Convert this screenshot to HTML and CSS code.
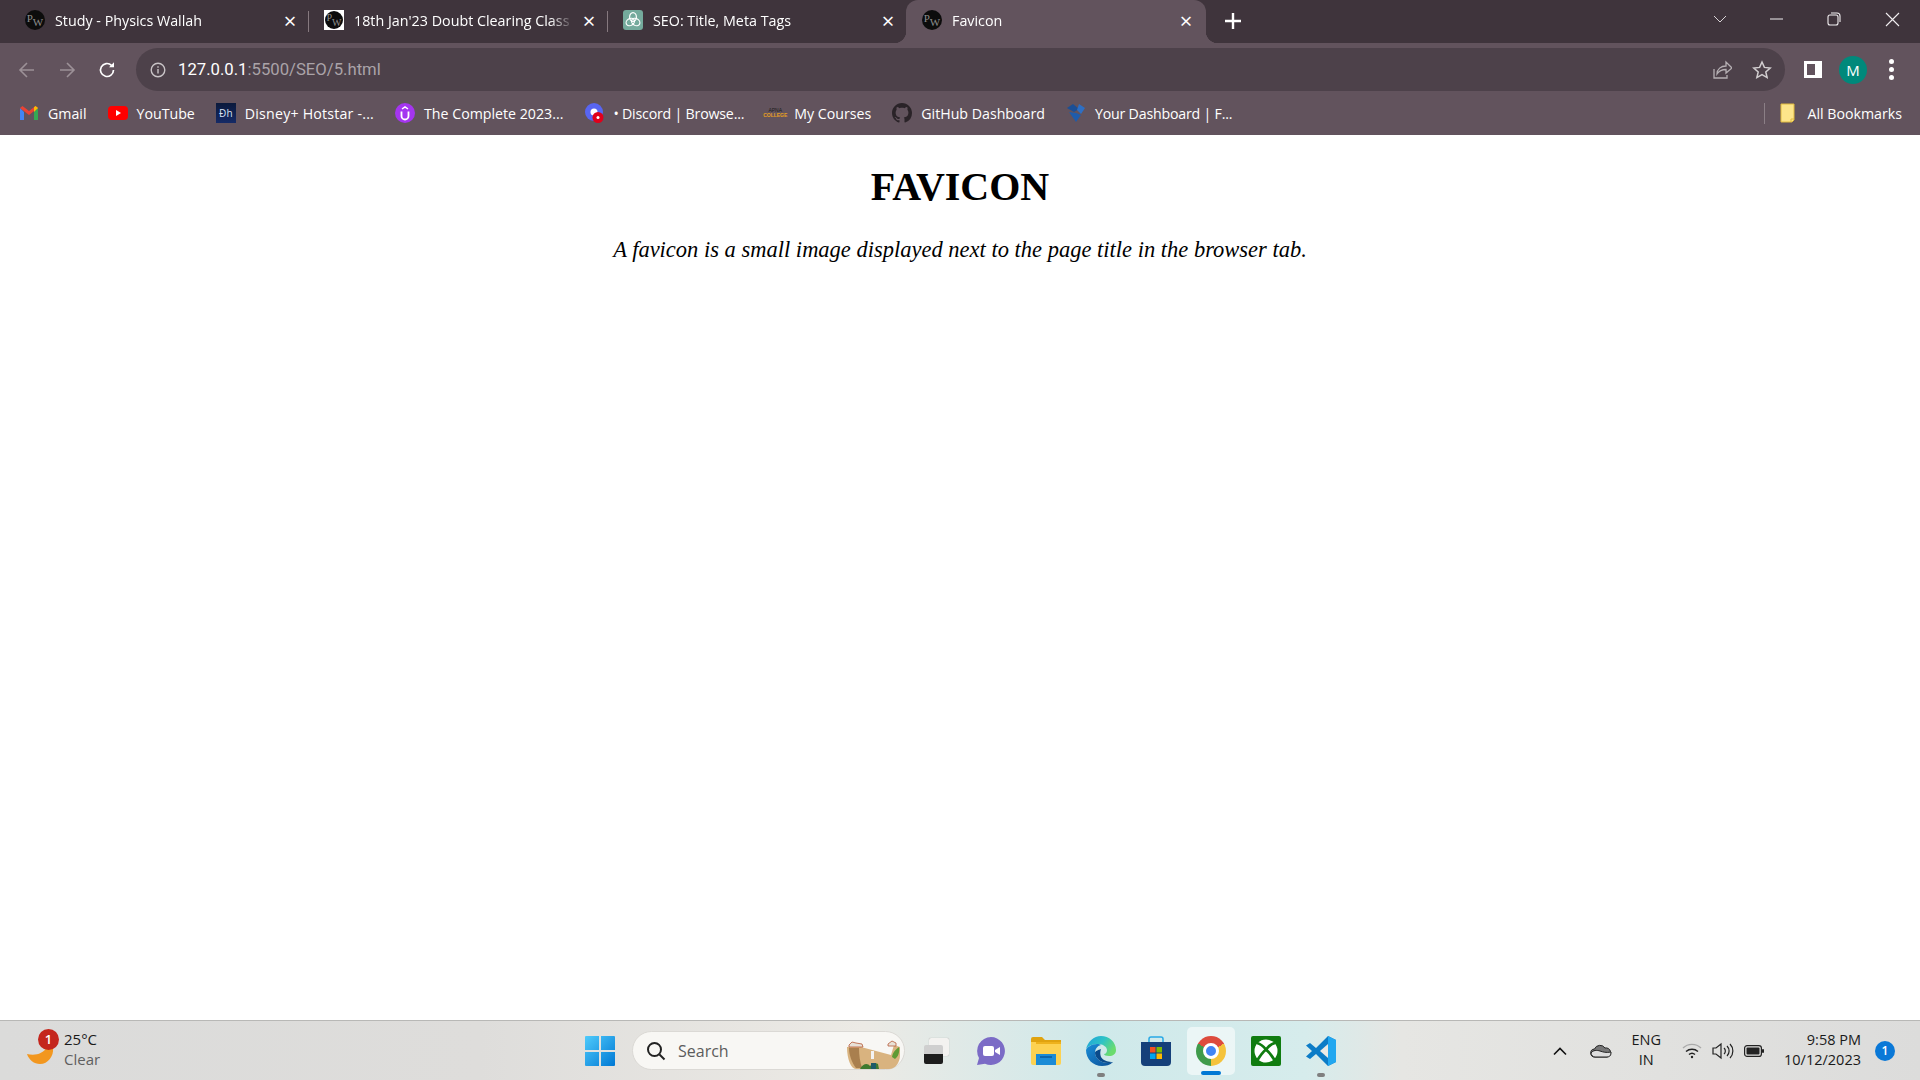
FILE: index.html
```html
<!DOCTYPE html>
<html lang="en">
<head>
    <meta charset="UTF-8">
    <title>Favicon</title>
    <link rel="stylesheet" href="styles.css">
</head>
<body>
    <div class="tab-strip">
        <div class="tab">
            <span class="fav fav-pw"><span>P</span><span>W</span></span>
            <span class="tab-title">Study - Physics Wallah</span>
            <span class="tab-close">&times;</span>
        </div>
        <div class="tab">
            <span class="fav fav-square"><span class="fav fav-pw small"><span>P</span><span>W</span></span></span>
            <span class="tab-title">18th Jan'23 Doubt Clearing Class</span>
            <span class="tab-close">&times;</span>
        </div>
        <div class="tab no-sep">
            <span class="fav fav-gpt">
                <svg viewBox="0 0 20 20" width="20" height="20" fill="none" stroke="#fff" stroke-width="1.2">
                    <ellipse cx="10" cy="7" rx="3.4" ry="4.4"/>
                    <ellipse cx="7.3" cy="12" rx="3.4" ry="4.4" transform="rotate(60 7.3 12)"/>
                    <ellipse cx="12.7" cy="12" rx="3.4" ry="4.4" transform="rotate(-60 12.7 12)"/>
                </svg>
            </span>
            <span class="tab-title">SEO: Title, Meta Tags</span>
            <span class="tab-close">&times;</span>
        </div>
        <div class="tab active">
            <span class="fav fav-pw"><span>P</span><span>W</span></span>
            <span class="tab-title">Favicon</span>
            <span class="tab-close">&times;</span>
        </div>
        <span class="new-tab">
            <svg width="16" height="16" viewBox="0 0 16 16" fill="none" stroke="#fff" stroke-width="2.4"><path d="M8 0v16M0 8h16"/></svg>
        </span>
        <div class="window-btns">
            <svg width="58" height="20" viewBox="0 0 58 20" fill="none" stroke="#d8d3d6" stroke-width="1"><path d="M22 7l6 6 6-6"/></svg>
            <svg width="58" height="20" viewBox="0 0 58 20" fill="none" stroke="#f2eff1" stroke-width="1"><path d="M20 10h13"/></svg>
            <svg width="56" height="20" viewBox="0 0 56 20" fill="none" stroke="#f2eff1" stroke-width="1.1"><rect x="20" y="6" width="10" height="10" rx="2"/><path d="M23 4h6a3 3 0 0 1 3 3v6"/></svg>
            <svg width="56" height="20" viewBox="0 0 56 20" fill="none" stroke="#f2eff1" stroke-width="1.1"><path d="M22 4l13 13M35 4L22 17"/></svg>
        </div>
    </div>

    <div class="toolbar">
        <svg class="nav-icon" width="18" height="18" viewBox="0 0 18 18" fill="none" stroke="#9c9197" stroke-width="1.6"><path d="M16 9H2M9 2L2 9l7 7"/></svg>
        <svg class="nav-icon" width="18" height="18" viewBox="0 0 18 18" fill="none" stroke="#9c9197" stroke-width="1.6"><path d="M2 9h14M9 2l7 7-7 7"/></svg>
        <svg class="nav-icon" width="18" height="18" viewBox="0 0 18 18" fill="none" stroke="#fff" stroke-width="1.7"><path d="M15.5 9a6.5 6.5 0 1 1-2-4.7"/><path d="M16 1.2v5h-5z" fill="#fff" stroke="none"/></svg>
        <div class="omnibox">
            <svg width="16" height="16" viewBox="0 0 16 16" fill="none" stroke="#c9c4c7" stroke-width="1.4"><circle cx="8" cy="8" r="6.8"/><path d="M8 7v4.5M8 4.2v1.5"/></svg>
            <span class="url"><span class="url-host">127.0.0.1</span>:5500/SEO/5.html</span>
            <svg class="omni-share" width="20" height="20" viewBox="0 0 20 20" fill="none" stroke="#b5afb3" stroke-width="1.3"><path d="M2 9v9h13v-3"/><path d="M5 14c0-5 4-8 9-8V2l6 6-6 5V9.500c-4 0-7 1.500-9 4.500z"/></svg>
            <svg class="omni-star" width="20" height="20" viewBox="0 0 20 20" fill="none" stroke="#d2ced0" stroke-width="1.5"><path d="M10 2l2.400 5.400 5.800.6-4.400 3.900 1.300 5.700L10 14.700l-5.100 2.900 1.300-5.700L1.800 8l5.800-.6z"/></svg>
        </div>
        <span class="side-panel"><span></span></span>
        <span class="avatar">M</span>
        <span class="dots"><i></i><i></i><i></i></span>
    </div>

    <div class="bookmarks">
        <a class="bookmark">
            <svg class="bm-icon" viewBox="0 0 20 20"><path d="M1 5v12h4V9z" fill="#4285f4"/><path d="M19 5v12h-4V9z" fill="#34a853"/><path d="M1 5l9 7 9-7-2.500-2L10 8 3.500 3z" fill="#ea4335"/><path d="M15 9l4-4-2.500-2-1.500 1.200z" fill="#fbbc04"/></svg>
            Gmail
        </a>
        <a class="bookmark">
            <svg class="bm-icon" viewBox="0 0 20 20"><rect y="3" width="20" height="14" rx="4" fill="#f00"/><path d="M8 7l5 3-5 3z" fill="#fff"/></svg>
            YouTube
        </a>
        <a class="bookmark wide">
            <span class="bm-icon bm-hotstar">Ðh</span>
            Disney+ Hotstar -...
        </a>
        <a class="bookmark">
            <svg class="bm-icon" viewBox="0 0 20 20"><circle cx="10" cy="10" r="10" fill="#a435f0"/><path d="M6.500 8.500V13a3.500 3.500 0 0 0 7 0V8.500" fill="none" stroke="#fff" stroke-width="1.800"/><path d="M7 6l3-2 3 2" fill="none" stroke="#fff" stroke-width="1.500"/></svg>
            The Complete 2023...
        </a>
        <a class="bookmark tight">
            <svg class="bm-icon" viewBox="0 0 20 20"><circle cx="10" cy="9" r="9" fill="#5865f2"/><circle cx="10" cy="9" r="3.500" fill="#fff"/><circle cx="14" cy="14.500" r="5.500" fill="#e0001b"/><circle cx="14" cy="14.500" r="1.500" fill="#fff"/></svg>
            • Discord | Browse...
        </a>
        <a class="bookmark">
            <span class="bm-icon bm-apna"><span>APNA</span><b>COLLEGE</b></span>
            My Courses
        </a>
        <a class="bookmark">
            <svg class="bm-icon" viewBox="0 0 16 16"><path fill="#2a2328" d="M8 0C3.580 0 0 3.580 0 8c0 3.540 2.290 6.530 5.470 7.590.4.070.55-.17.55-.38 0-.19-.01-.82-.01-1.490-2.010.37-2.530-.49-2.690-.94-.09-.23-.48-.94-.82-1.130-.28-.15-.68-.52-.01-.53.63-.01 1.080.58 1.230.82.720 1.210 1.870.87 2.330.66.070-.52.280-.87.510-1.070-1.780-.2-3.640-.89-3.640-3.950 0-.87.310-1.590.820-2.150-.08-.2-.36-1.020.08-2.120 0 0 .67-.21 2.200.82.640-.18 1.320-.27 2-.27s1.360.09 2 .27c1.530-1.040 2.200-.82 2.200-.82.440 1.100.16 1.920.08 2.120.51.560.82 1.270.82 2.150 0 3.070-1.870 3.750-3.650 3.950.29.250.54.730.54 1.480 0 1.070-.01 1.930-.01 2.200 0 .21.150.46.550.38A8.010 8.010 0 0 0 16 8c0-4.420-3.580-8-8-8z"/></svg>
            GitHub Dashboard
        </a>
        <a class="bookmark tight">
            <svg class="bm-icon" viewBox="0 0 20 20"><path d="M1 5l6-4 6 5-5 3z" fill="#1b4f96"/><path d="M13 1l6 4-4 6-4-4z" fill="#2e6fc4"/><path d="M3 9l7 1 5 2-5 7z" fill="#1f5cab"/></svg>
            Your Dashboard | F...
        </a>
        <span class="bm-sep"></span>
        <a class="bookmark all">
            <svg class="bm-icon" viewBox="0 0 20 20"><path d="M3 1h13v16l-2 2H3z" fill="#fde58a" stroke="#e0bb3e"/><path d="M13 19v-3h3" fill="none" stroke="#e0bb3e"/></svg>
            All Bookmarks
        </a>
    </div>

    <main class="page">
        <h1>FAVICON</h1>
        <p><em>A favicon is a small image displayed next to the page title in the browser tab.</em></p>
    </main>

    <footer class="taskbar">
        <div class="weather">
            <svg class="moon" width="32" height="32" viewBox="0 0 32 32"><path d="M3 19c8 2 16 0 20-7l6 1c1 8-5 16-13 16-6 0-11-4-13-10z" fill="#f2971f"/></svg>
            <span class="weather-badge">1</span>
            <div class="weather-text">
                <span>25°C</span>
                <span class="muted">Clear</span>
            </div>
        </div>

        <div class="task-center">
            <svg class="start" width="30" height="30" viewBox="0 0 30 30">
                <defs><linearGradient id="win" x1="0" y1="0" x2="1" y2="1"><stop offset="0" stop-color="#4fcbfb"/><stop offset="1" stop-color="#0078d4"/></linearGradient></defs>
                <path d="M0 1a1 1 0 0 1 1-1h13v14H0zM16 0h13a1 1 0 0 1 1 1v13H16zM0 16h14v14H1a1 1 0 0 1-1-1zM16 16h14v13a1 1 0 0 1-1 1H16z" fill="url(#win)"/>
            </svg>
            <div class="search">
                <svg width="20" height="20" viewBox="0 0 20 20" fill="none" stroke="#222" stroke-width="2"><circle cx="8.500" cy="8.500" r="6.500"/><path d="M13.500 13.500l5 5"/></svg>
                <span>Search</span>
                <svg class="search-art" width="56" height="30" viewBox="0 0 56 30">
                    <path d="M1 8h14l30 8 3-10 6 2v8c0 8-5 14-11 14H10C5 30 1 20 1 8z" fill="#d9b37f"/>
                    <path d="M3 6l3-3 4 1 6 1 1 3H3z" fill="#e8e2d8" stroke="#b65a3a" stroke-width=".8"/>
                    <path d="M42 5l4-3 4 2v3h-8z" fill="#e8e2d8" stroke="#b65a3a" stroke-width=".8"/>
                    <path d="M13 9c0 7 1 14 3 20H10C6 24 3 16 3 9z" fill="#a97f4e"/>
                    <path d="M14 30c3-6 8-6 10-3 2-2 6-4 8-2l1 5z" fill="#3f7a2f"/>
                    <path d="M46 18c1-6 5-8 7-10 1 5-1 10-4 12z" fill="#5e9a34"/>
                    <path d="M25 12h3v8h-3z" fill="#f4f4f4"/>
                    <path d="M25 24h5v6h-5z" fill="#1e5a68"/>
                </svg>
            </div>
            <div class="task-icons">
                <span class="task-icon task-view"><i></i><b></b></span>
                <span class="task-icon">
                    <svg width="30" height="30" viewBox="0 0 30 30"><path d="M15 1a14 14 0 1 1-6 26.700L1 29l2-7A14 14 0 0 1 15 1z" fill="#7b6bc6"/><rect x="7" y="10" width="11" height="10" rx="2" fill="#fff"/><path d="M19 14l5-3v8l-5-3z" fill="#fff"/></svg>
                </span>
                <span class="task-icon">
                    <svg width="30" height="28" viewBox="0 0 30 28"><path d="M0 2a2 2 0 0 1 2-2h9l3 3h16v4H0z" fill="#e0a30f"/><path d="M0 5h30v21a2 2 0 0 1-2 2H2a2 2 0 0 1-2-2z" fill="#fdd251"/><path d="M5 5h25v2H5z" fill="#eeb21c"/><path d="M5 17h20v11H5z" fill="#1b8bd6"/><path d="M9 20h12" stroke="#0a5a9c" stroke-width="1.500"/></svg>
                </span>
                <span class="task-icon running">
                    <svg width="30" height="30" viewBox="0 0 30 30">
                        <defs>
                            <linearGradient id="edgeA" x1="0" y1="0" x2="1" y2=".5"><stop offset="0" stop-color="#1ea0dc"/><stop offset=".55" stop-color="#2ec3c6"/><stop offset="1" stop-color="#6bdc6e"/></linearGradient>
                            <linearGradient id="edgeB" x1="0" y1="0" x2="1" y2="1"><stop offset="0" stop-color="#1a8ed8"/><stop offset="1" stop-color="#0b4f96"/></linearGradient>
                        </defs>
                        <path d="M0 14C1 6 8 0 15 0c8 0 15 6 15 14 0 4-3 6-7 6-3 0-5-1-5-2 2 0 3-2 3-4 0-3-4-6-9-6C7 8 1 10 0 14z" fill="url(#edgeA)"/>
                        <path d="M0 14c1-3 6-6 11-6 2 0 3 .5 4 1-4 1-6 4-6 8 0 5 6 10 13 10 2 0 3-.5 5-1-3 3-7 4-11 4C7 30 0 23 0 14z" fill="url(#edgeB)"/>
                        <path d="M9 17c0 5 6 10 13 10 2 0 3-.5 5-1-4 0-10-1-12-5-1-3-1-5 0-8-3 1-6 2-6 4z" fill="#0a4a8a"/>
                    </svg>
                </span>
                <span class="task-icon">
                    <svg width="30" height="30" viewBox="0 0 30 30"><path d="M8 6V3a2 2 0 0 1 2-2h10a2 2 0 0 1 2 2v3" fill="none" stroke="#29a9e6" stroke-width="1.500"/><path d="M0 6h30v20a4 4 0 0 1-4 4H4a4 4 0 0 1-4-4z" fill="#15407a"/><rect x="9" y="11" width="5.500" height="5.500" fill="#f25022"/><rect x="15.500" y="11" width="5.500" height="5.500" fill="#7fba00"/><rect x="9" y="17.500" width="5.500" height="5.500" fill="#00a4ef"/><rect x="15.500" y="17.500" width="5.500" height="5.500" fill="#ffb900"/></svg>
                </span>
                <span class="task-icon open running-blue">
                    <span class="chrome"><span></span></span>
                </span>
                <span class="task-icon">
                    <svg width="30" height="30" viewBox="0 0 30 30"><rect width="30" height="30" rx="2" fill="#107c10"/><circle cx="15" cy="15" r="11.500" fill="#fff"/><path d="M6 7C10 8 13 11 15 13.500 17 11 20 8 24 7M6.500 24C9 20 12 16 15 13.500 18 16 21 20 23.500 24" fill="none" stroke="#107c10" stroke-width="2.800"/></svg>
                </span>
                <span class="task-icon running">
                    <svg width="30" height="30" viewBox="0 0 30 30"><path d="M22 0l8 4v22l-8 4L10 18l-6 5-4-2.500L6 15 0 9.500 4 7l6 5z" fill="#0c7cc7"/><path d="M22 0l8 4v22l-8 4z" fill="#22a7f0"/><path d="M22 8l-8 7 8 7z" fill="#eceae5"/></svg>
                </span>
            </div>
        </div>

        <div class="tray">
            <svg width="16" height="10" viewBox="0 0 16 10" fill="none" stroke="#111" stroke-width="1.600"><path d="M2 8.500l6-6 6 6"/></svg>
            <svg class="tray-cloud" width="22" height="14" viewBox="0 0 22 14"><path d="M5 13a4 4 0 0 1-.5-8A6 6 0 0 1 15 4a4.500 4.500 0 0 1 2 9z" fill="#777" stroke="#222" stroke-width="1"/><path d="M1 9c2-3 6-3 9-2s6 2 11 1v1c0 3-2 4-4 4H5c-2 0-4-2-4-4z" fill="#ddd" stroke="#222"/></svg>
            <div class="lang"><span>ENG</span><span>IN</span></div>
            <svg class="tray-wifi" width="20" height="16" viewBox="0 0 20 16" fill="none" stroke="#222" stroke-width="1.400"><path d="M1 5a13 13 0 0 1 18 0" stroke="#aaa"/><path d="M4 8.500a9 9 0 0 1 12 0M7 11.500a4.500 4.500 0 0 1 6 0"/><circle cx="10" cy="14" r="1.200" fill="#222" stroke="none"/></svg>
            <svg width="22" height="18" viewBox="0 0 22 18" fill="none" stroke="#222" stroke-width="1.200"><path d="M1 6h3l5-4v14l-5-4H1z"/><path d="M12 6a4 4 0 0 1 0 6M15 4a7 7 0 0 1 0 10M18 2a10 10 0 0 1 0 14"/></svg>
            <svg width="20" height="12" viewBox="0 0 20 12"><rect x=".6" y=".6" width="16.800" height="10.800" rx="2.500" fill="none" stroke="#222" stroke-width="1.200"/><rect x="2.500" y="2.500" width="13" height="7" rx="1" fill="#222"/><rect x="18" y="4" width="2" height="4" rx="1" fill="#222"/></svg>
            <div class="clock"><span>9:58 PM</span><span>10/12/2023</span></div>
            <span class="notify">1</span>
        </div>
    </footer>
</body>
</html>
```

FILE: styles.css
```css
* {
    box-sizing: border-box;
}

html, body {
    margin: 0;
    height: 100%;
}

body {
    width: 1920px;
    height: 1080px;
    overflow: hidden;
    display: flex;
    flex-direction: column;
    background-color: #fff;
    font-family: "Open Sans", "Noto Sans", sans-serif;
}

/* tab strip */
.tab-strip {
    height: 43px;
    flex: none;
    display: flex;
    align-items: stretch;
    padding-left: 9px;
    background-color: #3f343c;
    color: #fff;
}

.tab {
    position: relative;
    width: 299px;
    display: flex;
    align-items: center;
    padding: 0 8px 3px 16px;
    font-size: 14.3px;
}

.tab::after {
    content: "";
    position: absolute;
    right: -1px;
    top: 11px;
    height: 21px;
    width: 1px;
    background-color: #86797f;
}

.tab.no-sep::after {
    display: none;
}

.tab.active {
    width: 300px;
    padding-right: 10px;
    border-radius: 12px 12px 0 0;
    background-color: #62535d;
}

.tab.active::before,
.tab.active::after {
    content: "";
    position: absolute;
    top: auto;
    bottom: 0;
    width: 12px;
    height: 12px;
}

.tab.active::before {
    left: -12px;
    background: radial-gradient(circle at 0 0, #3f343c 12px, #62535d 12.5px);
}

.tab.active::after {
    right: -12px;
    background: radial-gradient(circle at 100% 0, #3f343c 12px, #62535d 12.5px);
}

.fav {
    width: 20px;
    height: 20px;
    flex: none;
    display: flex;
    align-items: center;
    justify-content: center;
}

.fav-pw {
    border-radius: 50%;
    background-color: #0c0c0c;
    color: #8d8d8d;
    font-family: "Liberation Serif", serif;
    font-size: 11px;
    line-height: 1;
}

.fav-pw span:last-child {
    margin-top: 5px;
}

.fav-pw span:first-child {
    margin-top: -4px;
}

.fav-square {
    background-color: #fff;
}

.fav-pw.small {
    width: 18px;
    height: 18px;
    font-size: 10px;
}

.fav-gpt {
    border-radius: 3px;
    background-color: #74aa9c;
}

.tab-title {
    flex: 1;
    margin: 0 5px 0 10px;
    white-space: nowrap;
    overflow: hidden;
    -webkit-mask-image: linear-gradient(to left, transparent 0, #000 24px);
    mask-image: linear-gradient(to left, transparent 0, #000 24px);
}

.tab-close {
    width: 20px;
    text-align: center;
    font-size: 22px;
    line-height: 20px;
    color: #fff;
}

.new-tab {
    width: 54px;
    display: flex;
    align-items: center;
    justify-content: center;
    padding-bottom: 2px;
}

.window-btns {
    margin-left: auto;
    display: flex;
    align-items: center;
    padding-bottom: 6px;
}

/* address bar */
.toolbar {
    height: 53px;
    flex: none;
    display: flex;
    align-items: center;
    padding: 5px 0 5px 18px;
    background-color: #62535d;
}

.nav-icon {
    margin-right: 22px;
}

.nav-icon:nth-child(3) {
    margin-right: 20px;
}

.omnibox {
    width: 1649px;
    height: 43px;
    display: flex;
    align-items: center;
    padding: 0 13px 0 14px;
    border-radius: 22px;
    background-color: #4d414a;
}

.url {
    margin-left: 12px;
    font-family: "Roboto", sans-serif;
    font-size: 16.7px;
    color: #aaa3a8;
}

.url-host {
    color: #fff;
}

.omni-share {
    margin-left: auto;
    margin-right: 20px;
}

.side-panel {
    margin-left: 19px;
    width: 18px;
    height: 17px;
    display: flex;
    border: 3px solid #fff;
    background-color: #fff;
}

.side-panel span {
    width: 8px;
    background-color: #62535d;
}

.avatar {
    margin-left: 17px;
    width: 28px;
    height: 28px;
    border-radius: 50%;
    background-color: #00897b;
    color: #fff;
    font-size: 15px;
    line-height: 28px;
    text-align: center;
}

.dots {
    margin-left: 22px;
    display: flex;
    flex-direction: column;
    gap: 3px;
}

.dots i {
    width: 5px;
    height: 5px;
    border-radius: 50%;
    background-color: #fff;
}

/* bookmarks */
.bookmarks {
    height: 39px;
    flex: none;
    display: flex;
    align-items: center;
    padding: 0 18px 5px 19px;
    background-color: #62535d;
    color: #fff;
    font-size: 14.2px;
}

.bookmark {
    display: flex;
    align-items: center;
    gap: 9px;
    margin-right: 21px;
    white-space: nowrap;
}

.bookmark.wide {
    letter-spacing: 0.2px;
}

.bookmark.tight {
    letter-spacing: -0.2px;
}

.bookmark.all {
    margin-right: 0;
}

.bm-icon {
    width: 20px;
    height: 20px;
    flex: none;
}

.bm-hotstar {
    background: linear-gradient(#0b1a3c, #152a66);
    color: #d9e3f5;
    font-size: 10px;
    line-height: 20px;
    text-align: center;
}

.bm-apna {
    display: flex;
    flex-direction: column;
    align-items: center;
    justify-content: center;
    font-family: "Liberation Sans", sans-serif;
    font-size: 5px;
    line-height: 5px;
    letter-spacing: 0;
    color: #1c1c1c;
}

.bm-apna b {
    color: #e8a020;
}

.bm-sep {
    margin-left: auto;
    margin-right: 13px;
    width: 1px;
    height: 21px;
    background-color: #8b7f86;
}

/* page content */
.page {
    flex: 1;
    text-align: center;
    font-family: "Liberation Serif", serif;
    color: #000;
}

.page h1 {
    margin: 28px 0 0;
    font-size: 40px;
    line-height: 48px;
}

.page p {
    margin: 25px 0 0;
    font-size: 22.5px;
    line-height: 28px;
}

/* taskbar */
.taskbar {
    position: relative;
    height: 60px;
    flex: none;
    display: flex;
    align-items: center;
    border-top: 1px solid #b8b8b6;
    background: linear-gradient(to right, #dbdbda 0, #dedddb 25%, #eceae5 45%, #cfe9ea 57%, #d6ecec 68%, #e6e6e3 73%, #dcdcdb 100%);
    color: #1a1a1a;
    font-size: 15px;
    line-height: 20px;
}

.weather {
    position: relative;
    width: 585px;
    flex: none;
    display: flex;
    align-items: center;
    padding-left: 24px;
}

.moon {
    flex: none;
}

.weather-badge {
    position: absolute;
    left: 38px;
    top: -4px;
    width: 21px;
    height: 21px;
    border-radius: 50%;
    background-color: #c4261d;
    color: #fff;
    font-size: 13px;
    font-weight: 600;
    line-height: 21px;
    text-align: center;
}

.weather-text {
    margin-left: 8px;
    margin-top: -4px;
    display: flex;
    flex-direction: column;
}

.muted {
    color: #5f5f5f;
}

.task-center {
    display: flex;
    align-items: center;
}

.search {
    margin-left: 17px;
    width: 273px;
    height: 39px;
    display: flex;
    align-items: center;
    padding: 0 2px 0 13px;
    border: 1px solid #dbd9d5;
    border-radius: 20px;
    background-color: #f8f7f4;
    color: #5c5c5c;
    font-size: 16px;
}

.search span {
    margin-left: 12px;
}

.search-art {
    margin-left: auto;
    align-self: flex-end;
}

.task-icons {
    margin-left: 3px;
    display: flex;
}

.task-icon {
    position: relative;
    width: 55px;
    height: 48px;
    display: flex;
    align-items: center;
    justify-content: center;
    border-radius: 5px;
}

.task-view i {
    position: absolute;
    left: 21px;
    top: 11px;
    width: 20px;
    height: 18px;
    border-radius: 2px;
    background-color: #f3f2f0;
    box-shadow: 0 0 1px #999;
}

.task-view b {
    position: absolute;
    left: 16px;
    top: 18px;
    width: 19px;
    height: 19px;
    border-radius: 2px;
    background: linear-gradient(#cfcfcf 50%, #1d1d1d 50%);
}

.running::after,
.running-blue::after {
    content: "";
    position: absolute;
    left: 50%;
    bottom: -2px;
    width: 8px;
    height: 4px;
    margin-left: -4px;
    border-radius: 2px;
    background-color: #7f7f7f;
}

.task-icon.open {
    background-color: rgba(255, 255, 255, 0.55);
    width: 48px;
    margin: 0 3.5px;
}

.running-blue::after {
    width: 20px;
    margin-left: -10px;
    bottom: 0;
    background-color: #0078d4;
}

.chrome {
    width: 30px;
    height: 30px;
    border-radius: 50%;
    display: flex;
    align-items: center;
    justify-content: center;
    background: conic-gradient(from -60deg, #dd4b3d 0 120deg, #f5c33b 120deg 240deg, #3f9b4b 240deg 360deg);
}

.chrome span {
    width: 16px;
    height: 16px;
    border: 3px solid #fff;
    border-radius: 50%;
    background-color: #4285f4;
}

.tray {
    position: absolute;
    right: 0;
    top: 0;
    bottom: 0;
    display: flex;
    align-items: center;
}

.tray-cloud {
    margin-left: 22px;
}

.lang {
    margin-left: 20px;
    margin-right: 21px;
    margin-top: -2px;
    display: flex;
    flex-direction: column;
    align-items: center;
    font-size: 14.5px;
}

.tray svg:nth-of-type(4) {
    margin-left: 10px;
}

.tray svg:nth-of-type(5) {
    margin-left: 10px;
}

.clock {
    margin-left: 20px;
    margin-top: -2px;
    display: flex;
    flex-direction: column;
    align-items: flex-end;
    font-size: 14.5px;
}

.notify {
    margin: 0 25px 0 14px;
    width: 20px;
    height: 20px;
    border-radius: 50%;
    background-color: #0a78d7;
    color: #fff;
    font-size: 12px;
    font-weight: 600;
    line-height: 20px;
    text-align: center;
}
```
